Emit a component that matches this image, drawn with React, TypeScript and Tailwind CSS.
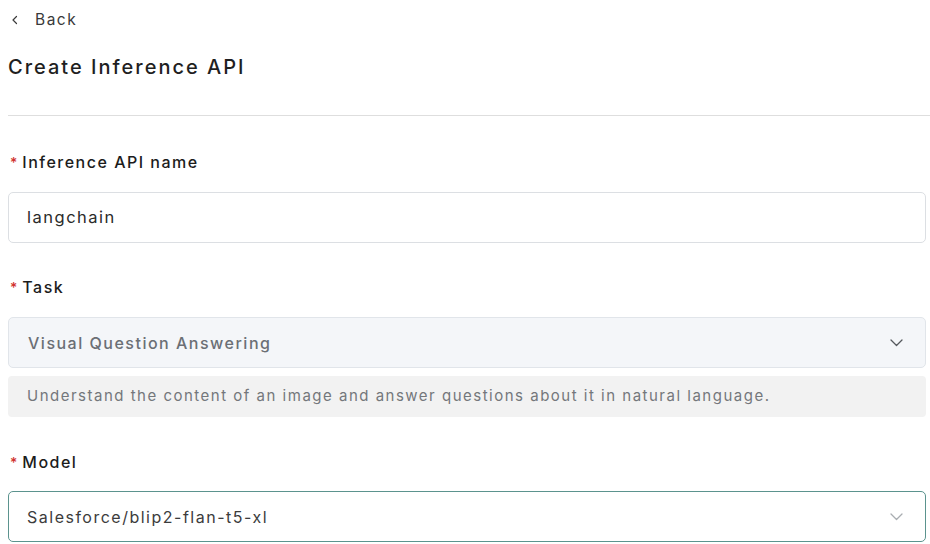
import React from 'react';

function Chevron({ className }: { className?: string }) {
  return (
    <svg width="13" height="8" viewBox="0 0 13 8" fill="none" className={className}>
      <path d="M1 1l5.5 5.5L12 1" stroke="currentColor" strokeWidth="1.3" strokeLinecap="round" strokeLinejoin="round" />
    </svg>
  );
}

function Label({ text, className }: { text: string; className?: string }) {
  return (
    <div className={`flex items-center h-[22px] text-[16px] font-medium tracking-[1.5px] text-[#1c1c1c] ${className ?? ''}`}>
      <span className="text-[#d0312d] ml-[2px] mr-[5px] text-[14px] tracking-normal">*</span>
      {text}
    </div>
  );
}

export default function App() {
  return (
    <div className="w-[930px] h-[544px] overflow-hidden bg-white pl-2 font-['Inter',sans-serif]">
      <div className="mt-[10px] flex items-center h-5 text-[15.5px] tracking-[1.5px] text-[#3a3a3a]">
        <svg width="8" height="10" viewBox="0 0 8 10" fill="none" className="ml-[3px] mr-[16px]">
          <path d="M5.5 1.5L2 5l3.5 3.5" stroke="currentColor" strokeWidth="1.2" strokeLinecap="round" strokeLinejoin="round" />
        </svg>
        Back
      </div>
      <h1 className="mt-[23px] h-7 leading-7 text-[20px] font-medium tracking-[2px] text-[#1f1f1f]">Create Inference API</h1>
      <div className="mt-[34px] h-px bg-[#dedede]" />

      <div className="pr-1">
        <Label text="Inference API name" className="mt-[35px]" />
        <div className="mt-[19px] h-[51px] rounded-[5px] border border-[#dcdfe3] flex items-center px-[18px] text-[16.5px] tracking-[1.5px] text-[#2a2a2a]">
          langchain
        </div>

        <Label text="Task" className="mt-[33px]" />
        <div className="mt-[19px] h-[51px] rounded-[5px] border border-[#e1e5ea] bg-[#f4f6f9] flex items-center justify-between pl-[19px] pr-[22px] text-[16px] font-medium tracking-[1.5px] text-[#6b6f75]">
          Visual Question Answering
          <Chevron className="text-[#55595e]" />
        </div>
        <div className="mt-2 h-[41px] rounded-[4px] bg-[#f2f2f2] flex items-center px-[19px] text-[15px] tracking-[1.5px] text-[#74777b]">
          Understand the content of an image and answer questions about it in natural language.
        </div>

        <Label text="Model" className="mt-[34px]" />
        <div className="mt-[18px] h-[51px] rounded-[5px] border-[1.5px] border-[#5b938e] flex items-center justify-between pl-[18px] pr-[22px] text-[16px] tracking-[1.5px] text-[#3c3c3c]">
          Salesforce/blip2-flan-t5-xl
          <Chevron className="text-[#a9adb1]" />
        </div>
      </div>
    </div>
  );
}
